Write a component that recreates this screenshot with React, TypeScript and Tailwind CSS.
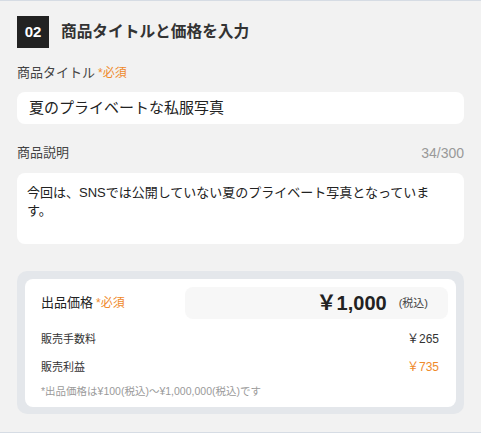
import React from 'react';

const font = { fontFamily: '"Liberation Sans", "Noto Sans CJK JP", sans-serif' };

const Required: React.FC = () => (
  <span className="ml-[3px] text-[12px] text-[#ef8a2b]">*必須</span>
);

const App: React.FC = () => {
  return (
    <div className="w-[481px] h-[434px] bg-white" style={font}>
      <div className="box-border h-[433px] bg-[#f2f2f2] border-t border-b border-[#d6dce4] px-[17px] pt-[15px]">
        {/* Header */}
        <div className="flex items-center gap-3">
          <div className="w-8 h-8 bg-[#222222] text-white text-[15px] font-bold flex items-center justify-center">
            02
          </div>
          <h2 className="text-[15.7px] font-bold text-[#333333] leading-8">商品タイトルと価格を入力</h2>
        </div>

        {/* Title */}
        <div className="mt-4 h-[18px] leading-[18px] text-[13px] text-[#444444] flex items-center">
          商品タイトル
          <Required />
        </div>
        <div className="mt-[10px] h-8 rounded-lg bg-white px-3 text-[15px] leading-8 text-[#222222]">
          夏のプライベートな私服写真
        </div>

        {/* Description */}
        <div className="mt-5 h-[18px] leading-[18px] flex items-center justify-between">
          <span className="text-[13px] text-[#444444]">商品説明</span>
          <span className="text-[14px] text-[#999999]">34/300</span>
        </div>
        <div className="mt-[11px] h-[71px] rounded-lg bg-white px-[10px] pt-[11px] text-[13px] leading-[18px] text-[#222222]">
          今回は、SNSでは公開していない夏のプライベート写真となっていま
          <br />
          す。
        </div>

        {/* Price */}
        <div className="mt-[27px] rounded-[10px] bg-[#e4e7eb] p-2 pb-[7px]">
          <div className="rounded-lg bg-white pt-2 pr-2 pl-4 pb-[9px]">
            <div className="flex items-center">
              <span className="text-[13px] text-[#222222]">出品価格</span>
              <Required />
              <div className="ml-auto w-[263px] h-8 rounded-lg bg-[#f7f7f7] flex items-center justify-end pr-5">
                <span className="text-[20px] font-bold text-[#222222] leading-8">￥1,000</span>
                <span className="ml-3 text-[11px] text-[#444444]">(税込)</span>
              </div>
            </div>
            <div className="pr-[9px]">
              <div className="mt-[11px] h-[18px] leading-[18px] flex justify-between text-[11px] text-[#333333]">
                <span>販売手数料</span>
                <span className="text-[12px]">￥265</span>
              </div>
              <div className="mt-[10px] h-[18px] leading-[18px] flex justify-between text-[11px] text-[#333333]">
                <span>販売利益</span>
                <span className="text-[12px] text-[#ef8a2b]">￥735</span>
              </div>
              <div className="mt-2 h-[14px] leading-[14px] text-[10.5px] text-[#9a9a9a]">
                *出品価格は¥100(税込)〜¥1,000,000(税込)です
              </div>
            </div>
          </div>
        </div>
      </div>
    </div>
  );
};

export default App;
